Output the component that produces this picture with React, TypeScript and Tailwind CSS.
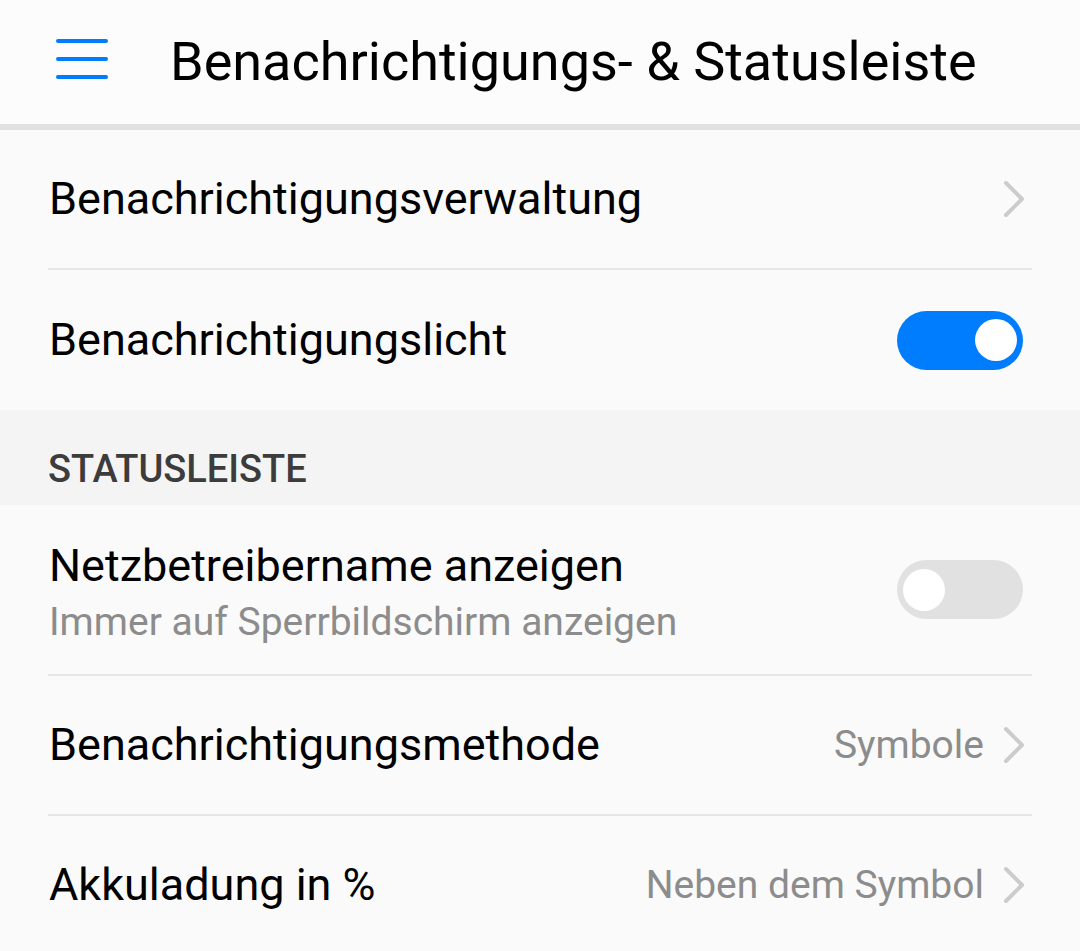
import React from "react";

function Chevron() {
  return (
    <svg width="24" height="38" viewBox="0 0 24 38" className="shrink-0">
      <path d="M4 3 L20 19 L4 35" fill="none" stroke="#cccccc" strokeWidth="4" strokeLinecap="round" strokeLinejoin="round" />
    </svg>
  );
}

function Toggle({ on }: { on: boolean }) {
  return (
    <div
      className={
        on
          ? "w-[126px] h-[59px] rounded-full bg-[#007dff] flex items-center justify-end pr-[6px]"
          : "w-[126px] h-[59px] rounded-full bg-[#e1e1e1] flex items-center justify-start pl-[6px]"
      }
    >
      <div className="w-[42px] h-[42px] rounded-full bg-white" />
    </div>
  );
}

function Divider() {
  return <div className="h-[2px] bg-[#e6e6e6] ml-[48px] mr-[48px]" />;
}

export default function App() {
  return (
    <div className="w-[1080px] h-[951px] bg-[#fafafa] overflow-hidden font-['Roboto',sans-serif] text-black">
      <header className="h-[124px] flex items-center bg-[#fcfcfc]">
        <div className="w-[52px] ml-[56px] mb-[6px] flex flex-col gap-[14px]">
          <div className="h-[4px] rounded-full bg-[#007dff]" />
          <div className="h-[4px] rounded-full bg-[#007dff]" />
          <div className="h-[4px] rounded-full bg-[#007dff]" />
        </div>
        <h1 className="ml-[62px] text-[54px] leading-none">Benachrichtigungs- &amp; Statusleiste</h1>
      </header>
      <div className="h-[6px] bg-[#e1e1e1]" />

      <div className="h-[138px] flex items-center justify-between pl-[49px] pr-[54px]">
        <span className="text-[45px]">Benachrichtigungsverwaltung</span>
        <Chevron />
      </div>
      <Divider />
      <div className="h-[140px] flex items-center justify-between pl-[49px] pr-[57px]">
        <span className="text-[45px]">Benachrichtigungslicht</span>
        <Toggle on={true} />
      </div>

      <div className="h-[95px] bg-[#f4f4f4] flex items-center pl-[48px]">
        <span className="text-[38px] font-medium text-[#3c3c3c] pt-[24px]">STATUSLEISTE</span>
      </div>

      <div className="h-[169px] flex items-center justify-between pl-[49px] pr-[57px]">
        <div className="flex flex-col pt-[11px]">
          <span className="text-[45px] leading-[54px]">Netzbetreibername anzeigen</span>
          <span className="text-[39px] leading-[58px] text-[#8c8c8c]">Immer auf Sperrbildschirm anzeigen</span>
        </div>
        <Toggle on={false} />
      </div>
      <Divider />
      <div className="h-[138px] flex items-center justify-between pl-[49px] pr-[54px]">
        <span className="text-[45px]">Benachrichtigungsmethode</span>
        <div className="flex items-center gap-[18px]">
          <span className="text-[39px] text-[#8c8c8c]">Symbole</span>
          <Chevron />
        </div>
      </div>
      <Divider />
      <div className="h-[138px] flex items-center justify-between pl-[49px] pr-[54px]">
        <span className="text-[45px]">Akkuladung in %</span>
        <div className="flex items-center gap-[18px]">
          <span className="text-[39px] text-[#8c8c8c]">Neben dem Symbol</span>
          <Chevron />
        </div>
      </div>
    </div>
  );
}
